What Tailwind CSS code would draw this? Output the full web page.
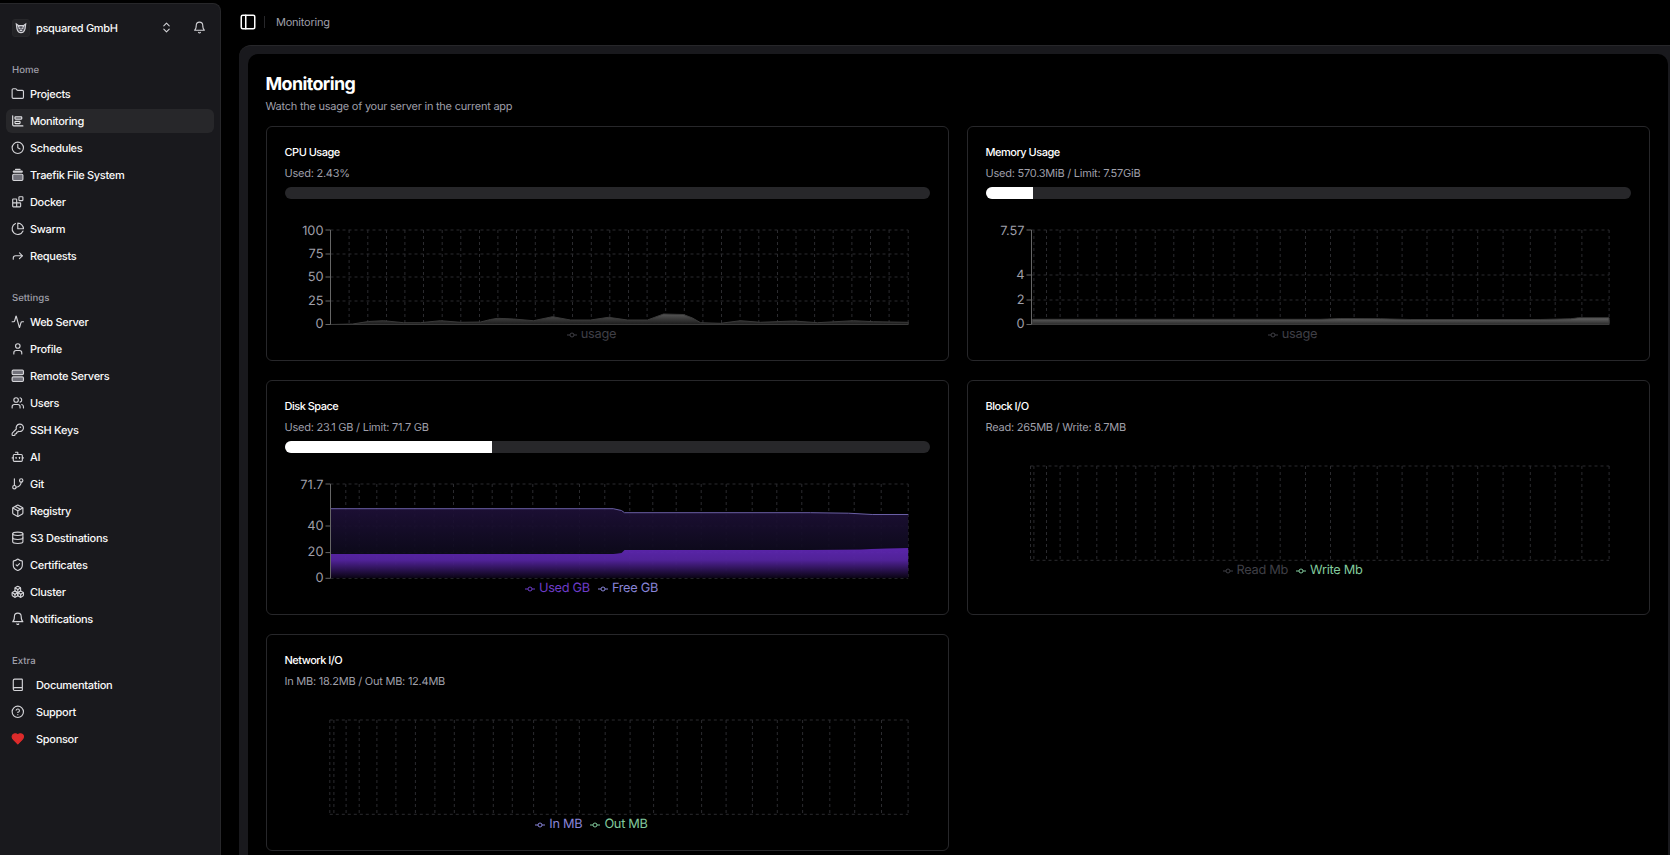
<!doctype html>
<html>

<head>
    <meta charset="UTF-8">
    <meta name="viewport" content="width=device-width, initial-scale=1.0">
    <title>Monitoring</title>
    <script src="https://cdn.jsdelivr.net/npm/@tailwindcss/browser@4"></script>
</head>

<body class="bg-black">
    <div class="flex h-screen overflow-hidden bg-black font-['Inter',sans-serif] text-[#fafafa] [text-rendering:geometricPrecision]">
        <!-- sidebar -->
        <aside class="mt-[3px] w-[221px] shrink-0 rounded-tr-lg border-t border-r border-[#27272a] bg-[#19191d]">
            <div class="flex h-[58px] items-start pt-[15px] pl-3 pr-[14px]">
                <div class="flex h-[18px] w-[18px] items-center justify-center rounded-[3px] border border-[#27272a] bg-[#232326]">
                    <svg class="h-[14px] w-[14px] text-zinc-300" viewBox="0 0 24 24" fill="none" stroke="currentColor" stroke-width="2"><path d="M4 5l4 3h8l4-3-1 8c-1 4-4 7-7 7s-6-3-7-7z" fill="#52525b"/><path d="M8 12l3 1M16 12l-3 1M10 16h4M7 8l2 3M17 8l-2 3"/></svg>
                </div>
                <span class="ml-[6px] text-[11px] leading-[18px] font-medium tracking-[-0.3px]">psquared GmbH</span>
                <svg class="ml-auto mt-[2px] h-[13px] w-[13px] text-zinc-300" viewBox="0 0 24 24" fill="none" stroke="currentColor" stroke-width="2" stroke-linecap="round" stroke-linejoin="round"><path d="m7 15 5 5 5-5"/><path d="m7 9 5-5 5 5"/></svg>
                <svg class="ml-5 mt-[2px] h-[13px] w-[13px] text-zinc-300" viewBox="0 0 24 24" fill="none" stroke="currentColor" stroke-width="2" stroke-linecap="round" stroke-linejoin="round"><path d="M6 8a6 6 0 0 1 12 0c0 7 3 9 3 9H3s3-2 3-9"/><path d="M10.3 21a1.94 1.94 0 0 0 3.4 0"/></svg>
            </div>

            <nav class="px-[6px] text-[11px] font-medium tracking-[-0.3px]">
                <p class="mb-1 h-4 pl-[6px] text-[9.6px] leading-[18px] tracking-normal text-zinc-400">Home</p>
                <ul class="flex flex-col gap-[3px]">
                    <li class="flex h-6 items-center gap-[5.4px] pl-[5px]"><svg class="h-[13.6px] w-[13.6px] text-zinc-300" viewBox="0 0 24 24" fill="none" stroke="currentColor" stroke-width="2" stroke-linecap="round" stroke-linejoin="round"><path d="M20 20a2 2 0 0 0 2-2V8a2 2 0 0 0-2-2h-7.9a2 2 0 0 1-1.69-.9L9.6 3.9A2 2 0 0 0 7.93 3H4a2 2 0 0 0-2 2v13a2 2 0 0 0 2 2Z"/></svg>Projects</li>
                    <li class="flex h-6 items-center gap-[5.4px] rounded-md bg-[#27272a] pl-[5px]"><svg class="h-[13.6px] w-[13.6px] text-zinc-200" viewBox="0 0 24 24" fill="none" stroke="currentColor" stroke-width="2" stroke-linecap="round" stroke-linejoin="round"><path d="M3 3v16a2 2 0 0 0 2 2h16"/><rect x="7" y="13" width="9" height="4" rx="1"/><rect x="7" y="5" width="12" height="4" rx="1"/></svg>Monitoring</li>
                    <li class="flex h-6 items-center gap-[5.4px] pl-[5px]"><svg class="h-[13.6px] w-[13.6px] text-zinc-300" viewBox="0 0 24 24" fill="none" stroke="currentColor" stroke-width="2" stroke-linecap="round" stroke-linejoin="round"><circle cx="12" cy="12" r="10"/><polyline points="12 6 12 12 16 14"/></svg>Schedules</li>
                    <li class="flex h-6 items-center gap-[5.4px] pl-[5px]"><svg class="h-[13.6px] w-[13.6px] text-zinc-300" viewBox="0 0 24 24" fill="none" stroke="currentColor" stroke-width="2" stroke-linecap="round" stroke-linejoin="round"><rect x="3" y="11" width="18" height="11" rx="2" fill="#71717a"/><path d="M5 6.5h14" stroke-width="4"/><path d="M8 2.5h8" stroke-width="2"/></svg>Traefik File System</li>
                    <li class="flex h-6 items-center gap-[5.4px] pl-[5px]"><svg class="h-[13.6px] w-[13.6px] text-zinc-300" viewBox="0 0 24 24" fill="none" stroke="currentColor" stroke-width="2" stroke-linecap="round" stroke-linejoin="round"><rect width="7" height="7" x="14" y="3" rx="1"/><path d="M10 21V8a1 1 0 0 0-1-1H4a1 1 0 0 0-1 1v12a1 1 0 0 0 1 1h12a1 1 0 0 0 1-1v-5a1 1 0 0 0-1-1H3"/></svg>Docker</li>
                    <li class="flex h-6 items-center gap-[5.4px] pl-[5px]"><svg class="h-[13.6px] w-[13.6px] text-zinc-300" viewBox="0 0 24 24" fill="none" stroke="currentColor" stroke-width="2" stroke-linecap="round" stroke-linejoin="round"><path d="M21.21 15.89A10 10 0 1 1 8 2.83"/><path d="M22 12A10 10 0 0 0 12 2v10z"/></svg>Swarm</li>
                    <li class="flex h-6 items-center gap-[5.4px] pl-[5px]"><svg class="h-[13.6px] w-[13.6px] text-zinc-300" viewBox="0 0 24 24" fill="none" stroke="currentColor" stroke-width="2" stroke-linecap="round" stroke-linejoin="round"><polyline points="15 17 20 12 15 7"/><path d="M4 18v-2a4 4 0 0 1 4-4h12"/></svg>Requests</li>
                </ul>

                <p class="mt-[22px] mb-1 h-4 pl-[6px] text-[9.6px] leading-[18px] tracking-normal text-zinc-400">Settings</p>
                <ul class="flex flex-col gap-[3px]">
                    <li class="flex h-6 items-center gap-[5.4px] pl-[5px]"><svg class="h-[13.6px] w-[13.6px] text-zinc-300" viewBox="0 0 24 24" fill="none" stroke="currentColor" stroke-width="2" stroke-linecap="round" stroke-linejoin="round"><path d="M22 12h-2.48a2 2 0 0 0-1.93 1.46l-2.35 8.36a.25.25 0 0 1-.48 0L9.24 2.18a.25.25 0 0 0-.48 0l-2.35 8.36A2 2 0 0 1 4.49 12H2"/></svg>Web Server</li>
                    <li class="flex h-6 items-center gap-[5.4px] pl-[5px]"><svg class="h-[13.6px] w-[13.6px] text-zinc-300" viewBox="0 0 24 24" fill="none" stroke="currentColor" stroke-width="2" stroke-linecap="round" stroke-linejoin="round"><path d="M19 21v-2a4 4 0 0 0-4-4H9a4 4 0 0 0-4 4v2"/><circle cx="12" cy="7" r="4"/></svg>Profile</li>
                    <li class="flex h-6 items-center gap-[5.4px] pl-[5px]"><svg class="h-[13.6px] w-[13.6px] text-zinc-300" viewBox="0 0 24 24" fill="#71717a" stroke="currentColor" stroke-width="2" stroke-linecap="round" stroke-linejoin="round"><rect width="20" height="8" x="2" y="2" rx="2"/><rect width="20" height="8" x="2" y="14" rx="2"/></svg>Remote Servers</li>
                    <li class="flex h-6 items-center gap-[5.4px] pl-[5px]"><svg class="h-[13.6px] w-[13.6px] text-zinc-300" viewBox="0 0 24 24" fill="none" stroke="currentColor" stroke-width="2" stroke-linecap="round" stroke-linejoin="round"><path d="M16 21v-2a4 4 0 0 0-4-4H6a4 4 0 0 0-4 4v2"/><circle cx="9" cy="7" r="4"/><path d="M22 21v-2a4 4 0 0 0-3-3.87"/><path d="M16 3.13a4 4 0 0 1 0 7.75"/></svg>Users</li>
                    <li class="flex h-6 items-center gap-[5.4px] pl-[5px]"><svg class="h-[13.6px] w-[13.6px] text-zinc-300" viewBox="0 0 24 24" fill="none" stroke="currentColor" stroke-width="2" stroke-linecap="round" stroke-linejoin="round"><path d="M2.586 17.414A2 2 0 0 0 2 18.828V21a1 1 0 0 0 1 1h3a1 1 0 0 0 1-1v-1a1 1 0 0 1 1-1h1a1 1 0 0 0 1-1v-1a1 1 0 0 1 1-1h.172a2 2 0 0 0 1.414-.586l.814-.814a6.5 6.5 0 1 0-4-4z"/><circle cx="16.5" cy="7.5" r=".5" fill="currentColor"/></svg>SSH Keys</li>
                    <li class="flex h-6 items-center gap-[5.4px] pl-[5px]"><svg class="h-[13.6px] w-[13.6px] text-zinc-300" viewBox="0 0 24 24" fill="none" stroke="currentColor" stroke-width="2" stroke-linecap="round" stroke-linejoin="round"><path d="M12 8V4H8"/><rect width="16" height="12" x="4" y="8" rx="2"/><path d="M2 14h2"/><path d="M20 14h2"/><path d="M15 13v2"/><path d="M9 13v2"/></svg>AI</li>
                    <li class="flex h-6 items-center gap-[5.4px] pl-[5px]"><svg class="h-[13.6px] w-[13.6px] text-zinc-300" viewBox="0 0 24 24" fill="none" stroke="currentColor" stroke-width="2" stroke-linecap="round" stroke-linejoin="round"><line x1="6" x2="6" y1="3" y2="15"/><circle cx="18" cy="6" r="3"/><circle cx="6" cy="18" r="3"/><path d="M18 9a9 9 0 0 1-9 9"/></svg>Git</li>
                    <li class="flex h-6 items-center gap-[5.4px] pl-[5px]"><svg class="h-[13.6px] w-[13.6px] text-zinc-300" viewBox="0 0 24 24" fill="none" stroke="currentColor" stroke-width="2" stroke-linecap="round" stroke-linejoin="round"><path d="m7.5 4.27 9 5.15"/><path d="M21 8a2 2 0 0 0-1-1.73l-7-4a2 2 0 0 0-2 0l-7 4A2 2 0 0 0 3 8v8a2 2 0 0 0 1 1.73l7 4a2 2 0 0 0 2 0l7-4A2 2 0 0 0 21 16Z"/><path d="m3.3 7 8.7 5 8.7-5"/><path d="M12 22V12"/></svg>Registry</li>
                    <li class="flex h-6 items-center gap-[5.4px] pl-[5px]"><svg class="h-[13.6px] w-[13.6px] text-zinc-300" viewBox="0 0 24 24" fill="none" stroke="currentColor" stroke-width="2" stroke-linecap="round" stroke-linejoin="round"><ellipse cx="12" cy="5" rx="9" ry="3"/><path d="M3 5V19A9 3 0 0 0 21 19V5"/><path d="M3 12A9 3 0 0 0 21 12"/></svg>S3 Destinations</li>
                    <li class="flex h-6 items-center gap-[5.4px] pl-[5px]"><svg class="h-[13.6px] w-[13.6px] text-zinc-300" viewBox="0 0 24 24" fill="none" stroke="currentColor" stroke-width="2" stroke-linecap="round" stroke-linejoin="round"><path d="M20 13c0 5-3.5 7.5-7.66 8.95a1 1 0 0 1-.67-.01C7.5 20.5 4 18 4 13V6a1 1 0 0 1 1-1c2 0 4.5-1.2 6.24-2.72a1.17 1.17 0 0 1 1.52 0C14.51 3.81 17 5 19 5a1 1 0 0 1 1 1z"/><path d="m9 12 2 2 4-4"/></svg>Certificates</li>
                    <li class="flex h-6 items-center gap-[5.4px] pl-[5px]"><svg class="h-[13.6px] w-[13.6px] text-zinc-300" viewBox="0 0 24 24" fill="none" stroke="currentColor" stroke-width="2" stroke-linecap="round" stroke-linejoin="round"><path d="M2.97 12.92A2 2 0 0 0 2 14.63v3.24a2 2 0 0 0 .97 1.71l3 1.8a2 2 0 0 0 2.06 0L12 19v-5.5l-5-3-4.03 2.42Z"/><path d="m7 16.5-4.74-2.85"/><path d="m7 16.5 5-3"/><path d="M7 16.5v5.17"/><path d="M12 13.5V19l3.97 2.38a2 2 0 0 0 2.06 0l3-1.8a2 2 0 0 0 .97-1.71v-3.24a2 2 0 0 0-.97-1.71L17 10.5l-5 3Z"/><path d="m17 16.5-5-3"/><path d="m17 16.5 4.74-2.85"/><path d="M17 16.5v5.17"/><path d="M7.97 4.42A2 2 0 0 0 7 6.13v4.37l5 3 5-3V6.13a2 2 0 0 0-.97-1.71l-3-1.8a2 2 0 0 0-2.06 0l-3 1.8Z"/><path d="M12 8 7.26 5.15"/><path d="m12 8 4.74-2.85"/><path d="M12 13.5V8"/></svg>Cluster</li>
                    <li class="flex h-6 items-center gap-[5.4px] pl-[5px]"><svg class="h-[13.6px] w-[13.6px] text-zinc-300" viewBox="0 0 24 24" fill="none" stroke="currentColor" stroke-width="2" stroke-linecap="round" stroke-linejoin="round"><path d="M6 8a6 6 0 0 1 12 0c0 7 3 9 3 9H3s3-2 3-9"/><path d="M10.3 21a1.94 1.94 0 0 0 3.4 0"/></svg>Notifications</li>
                </ul>

                <p class="mt-[22px] mb-1 h-4 pl-[6px] text-[9.6px] leading-[18px] tracking-normal text-zinc-400">Extra</p>
                <ul class="flex flex-col gap-[3px]">
                    <li class="flex h-6 items-center gap-[11.4px] pl-[5px]"><svg class="h-[13.6px] w-[13.6px] text-zinc-300" viewBox="0 0 24 24" fill="none" stroke="currentColor" stroke-width="2" stroke-linecap="round" stroke-linejoin="round"><path d="M4 19.5v-15A2.5 2.5 0 0 1 6.5 2H19a1 1 0 0 1 1 1v18a1 1 0 0 1-1 1H6.5a1 1 0 0 1 0-5H20"/></svg>Documentation</li>
                    <li class="flex h-6 items-center gap-[11.4px] pl-[5px]"><svg class="h-[13.6px] w-[13.6px] text-zinc-300" viewBox="0 0 24 24" fill="none" stroke="currentColor" stroke-width="2" stroke-linecap="round" stroke-linejoin="round"><circle cx="12" cy="12" r="10"/><path d="M9.09 9a3 3 0 0 1 5.83 1c0 2-3 3-3 3"/><path d="M12 17h.01"/></svg>Support</li>
                    <li class="flex h-6 items-center gap-[11.4px] pl-[5px]"><svg class="h-[13.6px] w-[13.6px] text-[#dc2b2b]" viewBox="0 0 24 24" fill="currentColor" stroke="currentColor" stroke-width="2" stroke-linecap="round" stroke-linejoin="round"><path d="M19 14c1.49-1.46 3-3.21 3-5.5A5.5 5.5 0 0 0 16.5 3c-1.76 0-3 .5-4.5 2-1.5-1.5-2.74-2-4.5-2A5.5 5.5 0 0 0 2 8.5c0 2.3 1.5 4.05 3 5.5l7 7Z"/></svg>Sponsor</li>
                </ul>
            </nav>
        </aside>

        <main class="flex min-w-0 flex-1 flex-col pl-[18px]">
            <header class="flex h-[45px] shrink-0 items-center pb-[1px]">
                <svg class="h-[18px] w-[18px] text-white" viewBox="0 0 24 24" fill="none" stroke="currentColor" stroke-width="2" stroke-linecap="round" stroke-linejoin="round"><rect width="18" height="18" x="3" y="3" rx="2"/><path d="M9 3v18"/></svg>
                <span class="ml-[7px] h-3 w-px bg-[#27272a]"></span>
                <span class="ml-[11px] text-[11px] tracking-[-0.22px] text-zinc-400">Monitoring</span>
            </header>

            <!-- content panel -->
            <div class="flex-1 rounded-tl-xl border-t border-[#27272a] bg-[#19191d] pt-2 pr-[2px] pl-[9px]">
                <div class="h-full rounded-t-[10px] bg-black pt-[19px] pr-[18.5px] pl-[17.5px]">
                    <h1 class="text-[17.9px] leading-6 font-bold tracking-[-0.6px] text-white">Monitoring</h1>
                    <p class="mt-[1px] text-[11px] leading-4 tracking-[-0.24px] text-zinc-400">Watch the usage of your server in the current app</p>

                    <div class="mt-3 grid grid-cols-2 items-stretch gap-x-[18px] gap-y-[19px]">
                        <!-- CPU -->
                        <section class="h-[235px] rounded-md border border-[#27272a] px-[18px] pt-[17px]">
                            <h2 class="text-[11px] leading-4 font-medium tracking-[-0.5px] text-white">CPU Usage</h2>
                            <p class="mt-[5px] text-[11px] leading-4 tracking-[-0.24px] text-zinc-400">Used: 2.43%</p>
                            <div class="mt-[6px] h-3 rounded-full bg-[#27272a]"></div>
                            <svg class="mt-[21px] block overflow-visible" width="645" height="105" viewBox="284.5 220 645 105">
                                <defs><linearGradient id="g-cpu" x1="0" y1="0" x2="0" y2="1"><stop offset="0" stop-color="#555"/><stop offset="1" stop-color="#1c1c1c"/></linearGradient></defs>
                                <path stroke="#2b2b2f" stroke-dasharray="3 3" fill="none" d="M330 230H907.7M330 254H907.7M330 277H907.7M330 301H907.7M330 324.5H907.7M348.6 230V324.5M367.3 230V324.5M386 230V324.5M404.4 230V324.5M423 230V324.5M441.7 230V324.5M460.3 230V324.5M479 230V324.5M497.4 230V324.5M516 230V324.5M534.8 230V324.5M553.4 230V324.5M572 230V324.5M590.8 230V324.5M609.3 230V324.5M628 230V324.5M646.6 230V324.5M665.2 230V324.5M683.8 230V324.5M702.4 230V324.5M721 230V324.5M739.6 230V324.5M758.3 230V324.5M777 230V324.5M795.5 230V324.5M814.1 230V324.5M832.7 230V324.5M851.4 230V324.5M870 230V324.5M888.6 230V324.5M907.7 230V324.5"/>
                                <path fill="url(#g-cpu)" stroke="#3a3a3a" d="M330 324.5L352 324L368 321.5L383 320.7L403 322.7L420 322.7L440 320.7L460 322.3L480 322L490 319.5L497 318.3L513 319L533 320.7L552 316.7L570 320L590 320L608 317.3L627 320L647 320L663 314L683 314.5L692 318L700 322.7L720 323.3L740 320.7L760 322.3L793 321L817 322.7L853 320.7L873 321.7L907.7 322.3V324.5Z"/>
                                <path stroke="#666" fill="none" d="M330 230V324.5M325 230H330M325 254H330M325 277H330M325 301H330M325 324.5H330"/>
                                <g class="fill-zinc-400 text-[12.8px]" text-anchor="end" dominant-baseline="central">
                                    <text x="323" y="231">100</text><text x="323" y="254">75</text><text x="323" y="277">50</text><text x="323" y="301">25</text><text x="323" y="324">0</text>
                                </g>
                            </svg>
                            <div class="flex h-5 items-center justify-center gap-2 pr-[31px] text-[12.8px] tracking-[-0.3px] text-[#3f3f46]">
                                <span class="flex items-center gap-1"><svg width="10" height="10" viewBox="0 0 10 10" fill="none" stroke="currentColor"><path d="M0 5h3M7 5h3"/><circle cx="5" cy="5" r="2"/></svg>usage</span>
                            </div>
                        </section>

                        <!-- Memory -->
                        <section class="h-[235px] rounded-md border border-[#27272a] px-[18px] pt-[17px]">
                            <h2 class="text-[11px] leading-4 font-medium tracking-[-0.5px] text-white">Memory Usage</h2>
                            <p class="mt-[5px] text-[11px] leading-4 tracking-[-0.24px] text-zinc-400">Used: 570.3MiB / Limit: 7.57GiB</p>
                            <div class="mt-[6px] h-3 overflow-hidden rounded-full bg-[#27272a]"><div class="h-full w-[7.4%] bg-white"></div></div>
                            <svg class="mt-[21px] block overflow-visible" width="645" height="105" viewBox="985.5 220 645 105">
                                <defs><linearGradient id="g-mem" x1="0" y1="0" x2="0" y2="1"><stop offset="0" stop-color="#666"/><stop offset="1" stop-color="#2a2a2a"/></linearGradient></defs>
                                <path stroke="#2b2b2f" stroke-dasharray="3 3" fill="none" d="M1031 230H1608.6M1031 275H1608.6M1031 300H1608.6M1031 324.5H1608.6M1033.4 230V324.5M1046 230V324.5M1059.6 230V324.5M1077.3 230V324.5M1096.3 230V324.5M1115.8 230V324.5M1135.3 230V324.5M1154.7 230V324.5M1173.3 230V324.5M1193.2 230V324.5M1212.7 230V324.5M1233.5 230V324.5M1256.6 230V324.5M1279.7 230V324.5M1305 230V324.5M1330 230V324.5M1353.6 230V324.5M1376.7 230V324.5M1401.6 230V324.5M1426.5 230V324.5M1452.3 230V324.5M1477.2 230V324.5M1502.6 230V324.5M1529.8 230V324.5M1554.7 230V324.5M1581.4 230V324.5M1608.6 230V324.5"/>
                                <path fill="url(#g-mem)" stroke="#3a3a3a" d="M1032 319.3L1320 319.3L1340 318.6L1380 318.8L1410 319.5L1540 319.5L1570 318.8L1578 317.8L1608.6 317.8V324.5H1032Z"/>
                                <path stroke="#666" fill="none" d="M1031 230V324.5M1026 230H1031M1026 275H1031M1026 300H1031M1026 324.5H1031"/>
                                <g class="fill-zinc-400 text-[12.8px]" text-anchor="end" dominant-baseline="central">
                                    <text x="1024" y="231">7.57</text><text x="1024" y="275">4</text><text x="1024" y="300">2</text><text x="1024" y="324">0</text>
                                </g>
                            </svg>
                            <div class="flex h-5 items-center justify-center gap-2 pr-[31px] text-[12.8px] tracking-[-0.3px] text-[#3f3f46]">
                                <span class="flex items-center gap-1"><svg width="10" height="10" viewBox="0 0 10 10" fill="none" stroke="currentColor"><path d="M0 5h3M7 5h3"/><circle cx="5" cy="5" r="2"/></svg>usage</span>
                            </div>
                        </section>

                        <!-- Disk -->
                        <section class="h-[235px] rounded-md border border-[#27272a] px-[18px] pt-[17px]">
                            <h2 class="text-[11px] leading-4 font-medium tracking-[-0.5px] text-white">Disk Space</h2>
                            <p class="mt-[5px] text-[11px] leading-4 tracking-[-0.24px] text-zinc-400">Used: 23.1 GB / Limit: 71.7 GB</p>
                            <div class="mt-[6px] h-3 overflow-hidden rounded-full bg-[#27272a]"><div class="h-full w-[32.2%] bg-white"></div></div>
                            <svg class="mt-[21px] block overflow-visible" width="645" height="105" viewBox="284.5 474 645 105">
                                <defs>
                                    <linearGradient id="g-free" x1="0" y1="0" x2="0" y2="1"><stop offset="0" stop-color="#1e1038"/><stop offset="1" stop-color="#0d0a1c"/></linearGradient>
                                    <linearGradient id="g-used" x1="0" y1="0" x2="0" y2="1"><stop offset="0" stop-color="#5f27b3"/><stop offset=".4" stop-color="#5524a0"/><stop offset="1" stop-color="#0a0414"/></linearGradient>
                                </defs>
                                <path stroke="#2b2b2f" stroke-dasharray="3 3" fill="none" d="M330 484H907.7M330 526H907.7M330 552.6H907.7M330 578.3H907.7M345.3 484V578.3M358.7 484V578.3M376.3 484V578.3M395.3 484V578.3M414.3 484V578.3M433.7 484V578.3M453 484V578.3M472.3 484V578.3M491.7 484V578.3M511.3 484V578.3M532.3 484V578.3M555.7 484V578.3M579 484V578.3M604.3 484V578.3M629.3 484V578.3M652.3 484V578.3M675.7 484V578.3M700.7 484V578.3M725.7 484V578.3M751.7 484V578.3M776.3 484V578.3M801.3 484V578.3M828.3 484V578.3M853.7 484V578.3M880.7 484V578.3M907.7 484V578.3"/>
                                <path fill="url(#g-free)" fill-opacity=".92" d="M330 508.7H612.7L621 510.5L624 512.7H810L848 513.2L871.7 514.5H907.7V548L885 548.5L871 549L860 549.5L810 550H624L621 553L613 554H330Z"/>
                                <path fill="url(#g-used)" fill-opacity=".95" d="M330 554H613L621 553L624 550H810L860 549.5L871 549L885 548.5L907.7 548V578H330Z"/>
                                <path fill="none" stroke="#6a5fa5" d="M330 508.7H612.7L621 510.5L624 512.7H810L848 513.2L871.7 514.5H907.7"/>
                                <path stroke="#666" fill="none" d="M330 484V578.3M325 484H330M325 526H330M325 552.6H330M325 578.3H330"/>
                                <g class="fill-zinc-400 text-[12.8px]" text-anchor="end" dominant-baseline="central">
                                    <text x="323" y="485">71.7</text><text x="323" y="526">40</text><text x="323" y="552.6">20</text><text x="323" y="578">0</text>
                                </g>
                            </svg>
                            <div class="flex h-5 items-center justify-center gap-2 pr-[31px] text-[12.8px] tracking-[-0.3px]">
                                <span class="flex items-center gap-1 text-[#6d3cc8]"><svg width="10" height="10" viewBox="0 0 10 10" fill="none" stroke="currentColor"><path d="M0 5h3M7 5h3"/><circle cx="5" cy="5" r="2"/></svg>Used GB</span>
                                <span class="flex items-center gap-1 text-[#8884d8]"><svg width="10" height="10" viewBox="0 0 10 10" fill="none" stroke="currentColor"><path d="M0 5h3M7 5h3"/><circle cx="5" cy="5" r="2"/></svg>Free GB</span>
                            </div>
                        </section>

                        <!-- Block I/O -->
                        <section class="h-[235px] rounded-md border border-[#27272a] px-[18px] pt-[17px]">
                            <h2 class="text-[11px] leading-4 font-medium tracking-[-0.5px] text-white">Block I/O</h2>
                            <p class="mt-[5px] text-[11px] leading-4 tracking-[-0.24px] text-zinc-400">Read: 265MB / Write: 8.7MB</p>
                            <svg class="mt-[21px] block overflow-visible" width="645" height="105" viewBox="985.5 456 645 105">
                                <path stroke="#2b2b2f" stroke-dasharray="3 3" fill="none" d="M1030 466H1608.6M1030 560.3H1608.6M1030 466V560.3M1033.4 466V560.3M1046 466V560.3M1059.6 466V560.3M1077.3 466V560.3M1096.3 466V560.3M1115.8 466V560.3M1135.3 466V560.3M1154.7 466V560.3M1173.3 466V560.3M1193.2 466V560.3M1212.7 466V560.3M1233.5 466V560.3M1256.6 466V560.3M1279.7 466V560.3M1305 466V560.3M1330 466V560.3M1353.6 466V560.3M1376.7 466V560.3M1401.6 466V560.3M1426.5 466V560.3M1452.3 466V560.3M1477.2 466V560.3M1502.6 466V560.3M1529.8 466V560.3M1554.7 466V560.3M1581.4 466V560.3M1608.6 466V560.3"/>
                            </svg>
                            <div class="flex h-5 items-center justify-center gap-2 pr-[31px] text-[12.8px] tracking-[-0.3px]">
                                <span class="flex items-center gap-1 text-[#3f3f46]"><svg width="10" height="10" viewBox="0 0 10 10" fill="none" stroke="currentColor"><path d="M0 5h3M7 5h3"/><circle cx="5" cy="5" r="2"/></svg>Read Mb</span>
                                <span class="flex items-center gap-1 text-[#82ca9d]"><svg width="10" height="10" viewBox="0 0 10 10" fill="none" stroke="currentColor"><path d="M0 5h3M7 5h3"/><circle cx="5" cy="5" r="2"/></svg>Write Mb</span>
                            </div>
                        </section>

                        <!-- Network I/O -->
                        <section class="h-[217px] rounded-md border border-[#27272a] px-[18px] pt-[17px]">
                            <h2 class="text-[11px] leading-4 font-medium tracking-[-0.5px] text-white">Network I/O</h2>
                            <p class="mt-[5px] text-[11px] leading-4 tracking-[-0.24px] text-zinc-400">In MB: 18.2MB / Out MB: 12.4MB</p>
                            <svg class="mt-[21px] block overflow-visible" width="645" height="105" viewBox="284.5 710 645 105">
                                <path stroke="#2b2b2f" stroke-dasharray="3 3" fill="none" d="M329.3 720H907.6M329.3 814.3H907.6M329.3 720V814.3M333.4 720V814.3M345.6 720V814.3M358.7 720V814.3M376.4 720V814.3M395.4 720V814.3M414.9 720V814.3M434.4 720V814.3M453.8 720V814.3M473.3 720V814.3M492.8 720V814.3M511.8 720V814.3M533.1 720V814.3M555.7 720V814.3M578.8 720V814.3M604.7 720V814.3M629.6 720V814.3M653.1 720V814.3M676.7 720V814.3M701.1 720V814.3M725.6 720V814.3M751.9 720V814.3M776.8 720V814.3M802.1 720V814.3M829.3 720V814.3M854.2 720V814.3M881 720V814.3M907.6 720V814.3"/>
                            </svg>
                            <div class="flex h-5 items-center justify-center gap-2 pr-[31px] text-[12.8px] tracking-[-0.3px]">
                                <span class="flex items-center gap-1 text-[#8884d8]"><svg width="10" height="10" viewBox="0 0 10 10" fill="none" stroke="currentColor"><path d="M0 5h3M7 5h3"/><circle cx="5" cy="5" r="2"/></svg>In MB</span>
                                <span class="flex items-center gap-1 text-[#82ca9d]"><svg width="10" height="10" viewBox="0 0 10 10" fill="none" stroke="currentColor"><path d="M0 5h3M7 5h3"/><circle cx="5" cy="5" r="2"/></svg>Out MB</span>
                            </div>
                        </section>
                    </div>
                </div>
            </div>
        </main>
    </div>
</body>

</html>
